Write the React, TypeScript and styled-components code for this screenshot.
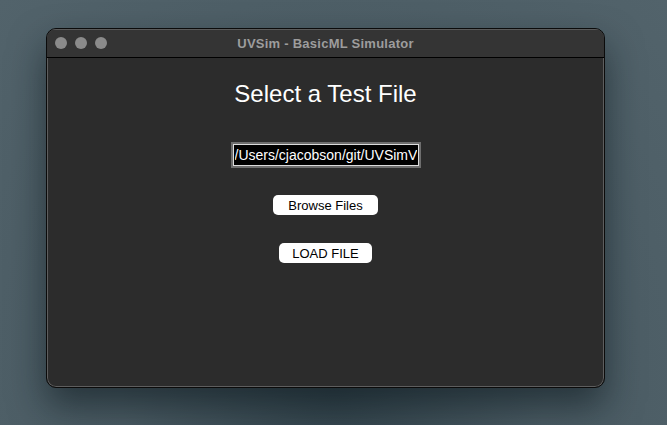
import React from "react";
import styled, { createGlobalStyle } from "styled-components";

const Global = createGlobalStyle`
  html, body { margin: 0; padding: 0; }
  body {
    width: 667px;
    height: 425px;
    overflow: hidden;
    font-family: "Liberation Sans", Arial, sans-serif;
    background: radial-gradient(ellipse at 50% 90%, #33444c 0%, #4a5b63 45%, #52636b 100%);
  }
`;

const Desktop = styled.div`
  width: 667px;
  height: 425px;
  box-sizing: border-box;
  padding: 28px 0 0 46px;
`;

const Window = styled.div`
  width: 559px;
  height: 360px;
  box-sizing: border-box;
  border-radius: 10px;
  border: 1px solid #0b0b0b;
  background: #2c2c2c;
  box-shadow: inset 0 0 0 1px #5e5e5e, 0 18px 36px rgba(10, 20, 25, 0.55);
  display: flex;
  flex-direction: column;
  overflow: hidden;
`;

const TitleBar = styled.div`
  height: 28px;
  flex: none;
  display: flex;
  align-items: center;
  position: relative;
  background: #343434;
  border-bottom: 1px solid #000;
  box-shadow: inset 0 1px 0 #5a5a5a;
  padding-left: 8px;
`;

const Lights = styled.div`
  display: flex;
  gap: 8px;
`;

const Light = styled.span`
  width: 12px;
  height: 12px;
  border-radius: 50%;
  background: #8b8b8b;
`;

const Title = styled.div`
  position: absolute;
  left: 0;
  right: 0;
  text-align: center;
  font-size: 13px;
  font-weight: bold;
  letter-spacing: 0.25px;
  color: #9d9d9d;
  pointer-events: none;
`;

const Content = styled.div`
  flex: 1;
  display: flex;
  flex-direction: column;
  align-items: center;
  padding-top: 22px;
`;

const Heading = styled.h1`
  margin: 0;
  font-size: 24px;
  font-weight: normal;
  line-height: 28px;
  color: #ffffff;
`;

const PathInput = styled.input`
  margin-top: 34px;
  width: 190px;
  height: 26px;
  box-sizing: border-box;
  background: #000;
  color: #fff;
  font-family: "Liberation Sans", Arial, sans-serif;
  font-size: 14px;
  padding: 0 2px;
  border: 2px solid #6e6e6e;
  box-shadow: inset 0 0 0 1px #dcdcdc;
  outline: none;
`;

const Button = styled.button<{ $w: number; $mt: number }>`
  margin-top: ${(p) => p.$mt}px;
  width: ${(p) => p.$w}px;
  height: 20px;
  border: none;
  border-radius: 5px;
  background: #ffffff;
  color: #000;
  font-family: "Liberation Sans", Arial, sans-serif;
  font-size: 13px;
  padding: 0;
`;

export default function App() {
  return (
    <>
      <Global />
      <Desktop>
        <Window>
          <TitleBar>
            <Lights>
              <Light />
              <Light />
              <Light />
            </Lights>
            <Title>UVSim - BasicML Simulator</Title>
          </TitleBar>
          <Content>
            <Heading>Select a Test File</Heading>
            <PathInput readOnly value="/Users/cjacobson/git/UVSimVM/test1.txt" />
            <Button $w={105} $mt={27}>Browse Files</Button>
            <Button $w={93} $mt={28}>LOAD FILE</Button>
          </Content>
        </Window>
      </Desktop>
    </>
  );
}
